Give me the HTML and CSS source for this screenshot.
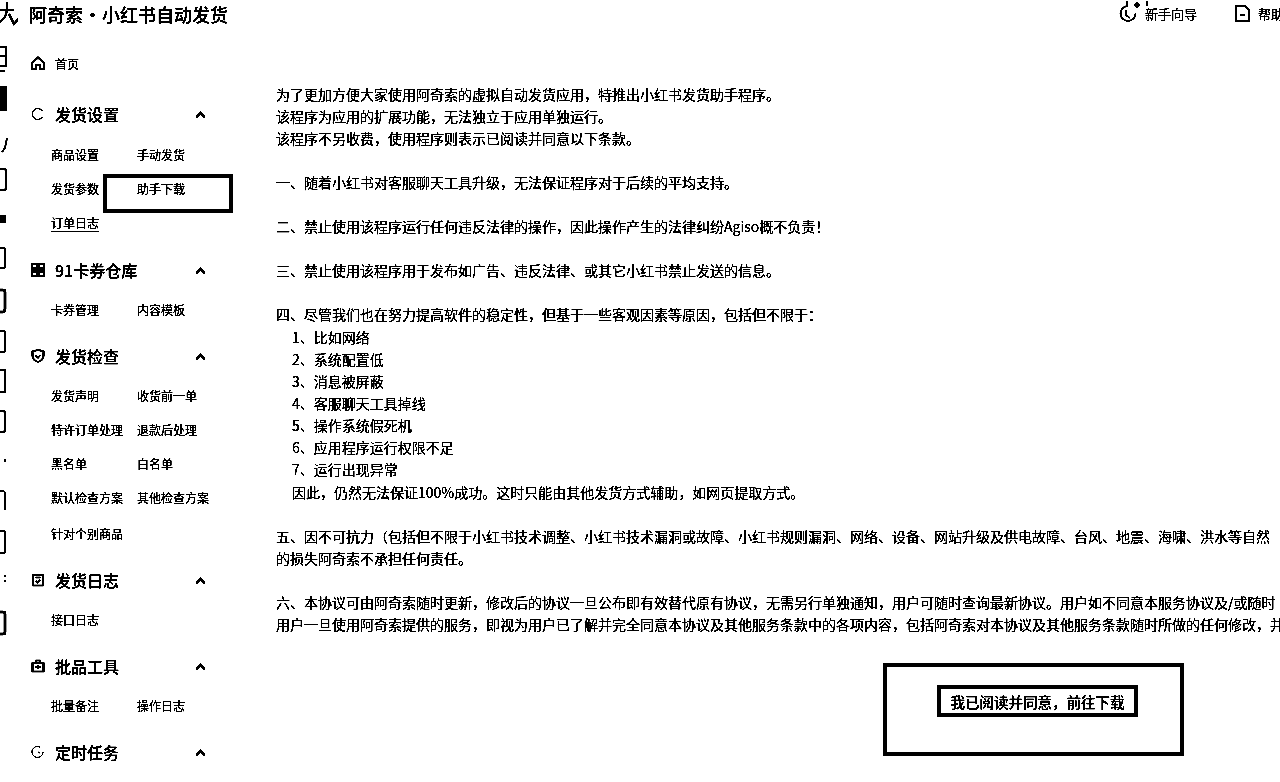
FILE: index.html
```html
<!DOCTYPE html>
<html lang="zh-CN">
<head>
    <meta charset="UTF-8">
    <title>阿奇索 · 小红书自动发货</title>
    <link rel="stylesheet" href="styles.css">
</head>
<body>
<div class="page">
    <!-- Header -->
    <header class="topbar">
        <svg class="logo" width="18" height="26" viewBox="0 0 18 26"><path d="M0 9H14M7 1V9Q6 17 0 21M9 13L14 23L19 17" fill="none" stroke="#000" stroke-width="2"/></svg>
        <h1 class="app-title">阿奇索 · 小红书自动发货</h1>
        <nav class="top-nav">
            <a class="top-link guide">
                <svg width="25" height="24" viewBox="0 0 25 24"><path d="M8 5A7.500 7.500 0 1 0 15.500 12.500M7 0V6M27 0V5" fill="none" stroke="#000" stroke-width="1.600"/><circle cx="17" cy="4" r="2.500"/><path d="M6 9V14L10 17" fill="none" stroke="#000" stroke-width="1.500"/></svg>
                <span>新手向导</span>
            </a>
            <a class="top-link help">
                <svg width="15" height="17" viewBox="0 0 15 17"><path d="M1 1H10L14 5V16H1ZM5 10H10" fill="none" stroke="#000" stroke-width="1.6"/></svg>
                <span>帮助</span>
            </a>
        </nav>
    </header>

    <div class="main">
        <!-- Cropped icon rail -->
        <svg class="rail" width="20" height="752" viewBox="0 30 20 752" fill="none" stroke="#000" stroke-width="2">
            <path d="M0 47H6V66H0M0 56H5"/>
            <path d="M0 71H5"/>
            <path d="M0 87H6V110H0Z" fill="#000"/>
            <path d="M7 138L5 148L2 152" stroke-width="1.5"/>
            <path d="M0 169H4Q6 169 6 171V188Q6 190 4 190H0"/>
            <path d="M0 216H5V222H0Z" fill="#000"/>
            <path d="M0 248H3Q5 248 5 250V266Q5 268 3 268H0" stroke-width="1.5"/>
            <path d="M0 290H3Q5 290 5 292V309Q5 312 3 312H0" stroke-width="2.5"/>
            <path d="M0 331H3Q5 331 5 333V350Q5 352 3 352H0" stroke-width="1.5"/>
            <path d="M0 370H5V392H0" stroke-width="2"/>
            <path d="M0 411H3Q5 411 5 413V430Q5 432 3 432H0" stroke-width="2"/>
            <path d="M5 459V462" stroke-width="1.5"/>
            <path d="M0 491H3Q5 491 5 493V510" stroke-width="1"/>
            <path d="M0 531H3Q5 531 5 533V551Q5 553 3 553H0" stroke-width="1.5"/>
            <path d="M5 575V577M5 580V582" stroke-width="1"/>
            <path d="M0 612H3Q5 612 5 614V632Q5 634 3 634H0" stroke-width="2.5"/>
        </svg>

        <!-- Sidebar -->
        <aside class="sidebar">
            <a class="home-row">
                <svg class="nav-icon" viewBox="0 0 14 14"><path d="M1 7L7 1.5L13 7V13H9V9H5V13H1Z"/></svg>
                <span>首页</span>
            </a>

            <section class="group first">
                <div class="group-title">
                    <svg class="nav-icon thin" viewBox="0 0 14 14"><path d="M11.5 4A5.5 5.5 0 1 0 11.5 10"/></svg>
                    <span>发货设置</span>
                    <i class="chevron"></i>
                </div>
                <div class="subs">
                    <a>商品设置</a>
                    <a>手动发货</a>
                    <a>发货参数</a>
                    <a class="marked">助手下载</a>
                    <a class="current">订单日志</a>
                </div>
            </section>

            <section class="group">
                <div class="group-title">
                    <svg class="nav-icon" viewBox="0 0 14 14"><path d="M1 1H6V5H1ZM8 1H13V5H8ZM0 7H14M1 9H6V13H1ZM8 9H13V13H8Z"/></svg>
                    <span>91卡券仓库</span>
                    <i class="chevron"></i>
                </div>
                <div class="subs">
                    <a>卡券管理</a>
                    <a>内容模板</a>
                </div>
            </section>

            <section class="group long">
                <div class="group-title">
                    <svg class="nav-icon" viewBox="0 0 14 14"><path d="M1.5 2.5L7 1L12.5 2.5V7Q12.5 11 7 13Q1.500 11 1.500 7ZM4.500 6.500L7 8.500L9.500 6"/></svg>
                    <span>发货检查</span>
                    <i class="chevron"></i>
                </div>
                <div class="subs">
                    <a>发货声明</a>
                    <a>收货前一单</a>
                    <a>特许订单处理</a>
                    <a>退款后处理</a>
                    <a>黑名单</a>
                    <a>白名单</a>
                    <a>默认检查方案</a>
                    <a>其他检查方案</a>
                    <a class="tall">针对个别商品</a>
                </div>
            </section>

            <section class="group">
                <div class="group-title">
                    <svg class="nav-icon" viewBox="0 0 14 14"><path d="M2 2H12V12.500H2ZM4.500 4.500H9.500M4.500 8L6.500 9.500L9.500 7"/></svg>
                    <span>发货日志</span>
                    <i class="chevron"></i>
                </div>
                <div class="subs">
                    <a>接口日志</a>
                </div>
            </section>

            <section class="group">
                <div class="group-title">
                    <svg class="nav-icon" viewBox="0 0 14 14"><path d="M1.500 4H12.500V12.500H1.500ZM5 4V1.500H9V4M4.500 8H9.500M7 6V10"/></svg>
                    <span>批品工具</span>
                    <i class="chevron"></i>
                </div>
                <div class="subs">
                    <a>批量备注</a>
                    <a>操作日志</a>
                </div>
            </section>

            <section class="group">
                <div class="group-title">
                    <svg class="nav-icon thin" viewBox="0 0 14 14"><path d="M12 7A5.500 5.500 0 1 1 9 2M7 7L9 8"/></svg>
                    <span>定时任务</span>
                    <i class="chevron"></i>
                </div>
            </section>
        </aside>

        <!-- Agreement text -->
        <main class="content">
            <div class="agreement">
                <p>为了更加方便大家使用阿奇索的虚拟自动发货应用，特推出小红书发货助手程序。<br>该程序为应用的扩展功能，无法独立于应用单独运行。<br>该程序不另收费，使用程序则表示已阅读并同意以下条款。</p>
                <p>一、随着小红书对客服聊天工具升级，无法保证程序对于后续的平均支持。</p>
                <p>二、禁止使用该程序运行任何违反法律的操作，因此操作产生的法律纠纷Agiso概不负责！</p>
                <p>三、禁止使用该程序用于发布如广告、违反法律、或其它小红书禁止发送的信息。</p>
                <p class="lead">四、尽管我们也在努力提高软件的稳定性，但基于一些客观因素等原因，包括但不限于：</p>
                <ol class="causes">
                    <li>1、比如网络</li>
                    <li>2、系统配置低</li>
                    <li>3、消息被屏蔽</li>
                    <li>4、客服聊天工具掉线</li>
                    <li>5、操作系统假死机</li>
                    <li>6、应用程序运行权限不足</li>
                    <li>7、运行出现异常</li>
                    <li class="summary">因此，仍然无法保证100%成功。这时只能由其他发货方式辅助，如网页提取方式。</li>
                </ol>
                <p>五、因不可抗力（包括但不限于小红书技术调整、小红书技术漏洞或故障、小红书规则漏洞、网络、设备、网站升级及供电故障、台风、地震、海啸、洪水等自然<br>的损失阿奇索不承担任何责任。</p>
                <p>六、本协议可由阿奇索随时更新，修改后的协议一旦公布即有效替代原有协议，无需另行单独通知，用户可随时查询最新协议。用户如不同意本服务协议及/或随时<br>用户一旦使用阿奇索提供的服务，即视为用户已了解并完全同意本协议及其他服务条款中的各项内容，包括阿奇索对本协议及其他服务条款随时所做的任何修改，并</p>
            </div>
            <div class="action-row">
                <div class="action-box">
                    <button class="agree-btn" type="button">我已阅读并同意，前往下载</button>
                </div>
            </div>
        </main>
    </div>
</div>
</body>
</html>
```

FILE: styles.css
```css
* {
    box-sizing: border-box;
}

html, body {
    margin: 0;
    padding: 0;
    background-color: #fff;
}

body {
    font-family: "Noto Sans CJK SC", "Liberation Sans", sans-serif;
    color: #000;
}

/* the reference is a pure black and white scan */
.page {
    width: 1280px;
    height: 782px;
    overflow: hidden;
    background-color: #fff;
    filter: grayscale(1) brightness(.68) contrast(12);
}

.topbar {
    display: flex;
    align-items: center;
    height: 30px;
    padding-bottom: 2px;
}

.logo {
    flex: none;
    margin-right: 11px;
}

.app-title {
    margin: 0;
    font-size: 18px;
    font-weight: 500;
    word-spacing: -3.5px;
    white-space: nowrap;
}

.top-nav {
    display: flex;
    align-items: center;
    margin-left: auto;
    margin-bottom: 2px;
}

.top-link {
    display: flex;
    align-items: center;
    font-size: 13px;
    white-space: nowrap;
}

.top-link svg {
    overflow: visible;
}

.guide {
    margin-right: 38px;
}

.help {
    width: 45px;
    overflow: hidden;
}

.help svg {
    flex: none;
    margin-right: 8px;
}

.main {
    display: flex;
    height: 752px;
}

.rail {
    flex: none;
}

.sidebar {
    flex: none;
    width: 256px;
    padding: 19px 0 0 11px;
}

.home-row {
    display: flex;
    align-items: center;
    height: 28px;
    font-size: 12px;
    font-weight: 500;
}

.nav-icon {
    flex: none;
    width: 14px;
    height: 14px;
    margin-right: 10px;
    fill: none;
    stroke: #000;
    stroke-width: 1.7;
}

.nav-icon.thin {
    stroke-width: 1;
}

.group {
    margin-bottom: 15px;
}

.group.first {
    margin-top: 22px;
    margin-bottom: 16px;
}

.group.long {
    margin-bottom: 17px;
}

.group-title {
    display: flex;
    align-items: center;
    width: 173px;
    height: 30px;
    font-size: 16px;
    font-weight: 500;
}

.chevron {
    width: 7px;
    height: 7px;
    margin: 4px 0 0 auto;
    border-top: 2.500px solid #000;
    border-left: 2.500px solid #000;
    transform: rotate(45deg);
}

.subs {
    display: grid;
    grid-template-columns: 86px 86px;
    grid-auto-rows: 34px;
    margin-top: 7px;
    padding-left: 20px;
    font-size: 12px;
    align-items: center;
}

.group.first .subs {
    margin-top: 8px;
}

.subs a {
    position: relative;
    white-space: nowrap;
}

.subs a.tall {
    top: 2px;
}

.subs a.current {
    text-decoration: underline;
    text-underline-offset: 3px;
}

/* hand drawn box around the entry */
.subs a.marked::after {
    content: "";
    box-sizing: border-box;
    position: absolute;
    left: -34px;
    top: -6px;
    width: 130px;
    height: 39px;
    border: 4px solid #000;
}

.content {
    flex: 1;
    min-width: 0;
    overflow: hidden;
    padding-top: 53px;
    font-size: 14px;
    line-height: 22px;
}

.agreement {
    white-space: nowrap;
}

.agreement p {
    margin: 0 0 22px;
}

.agreement p.lead {
    margin-bottom: 0;
}

.causes {
    list-style: none;
    margin: 0 0 22px;
    padding: 1px 0 0 16px;
}

.causes .summary {
    margin-top: 1px;
}

.action-row {
    display: flex;
    justify-content: flex-end;
    margin-top: 28px;
    padding-right: 96px;
}

.action-box {
    width: 301px;
    height: 93px;
    padding: 18px 0 0 50px;
    border: 4px solid #000;
}

.agree-btn {
    display: block;
    width: 201px;
    height: 32px;
    padding: 0;
    border: 4px solid #000;
    background-color: #fff;
    font-family: inherit;
    font-size: 14.500px;
    font-weight: 500;
    color: #000;
    white-space: nowrap;
}
```
